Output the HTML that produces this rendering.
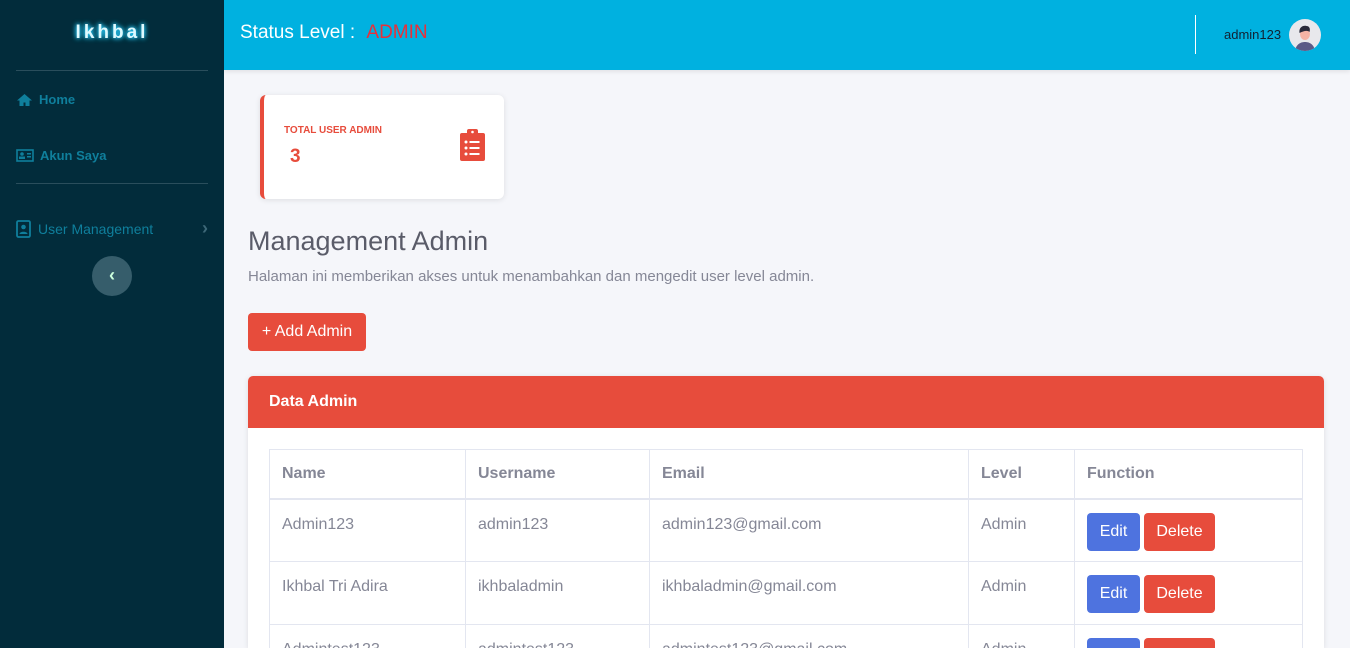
<!DOCTYPE html>
<html><head><style>
*{box-sizing:border-box;margin:0;padding:0}
html,body{width:1350px;height:648px;overflow:hidden}
body{font-family:"Liberation Sans",sans-serif;background:#f5f6fa;position:relative}
.sb{position:absolute;left:0;top:0;width:224px;height:648px;background:#022c3b}
.logo{position:absolute;top:22px;left:0;width:224px;text-align:center;color:#dffaff;font-weight:bold;font-size:19px;letter-spacing:3px;text-shadow:0 0 4px #2ad0ff,0 0 6px #2ad0ff}
.hr{position:absolute;left:16px;width:192px;height:1px;background:#2a4e5c}
.nav{position:absolute;left:16px;color:#0f7f9c;font-size:13px;font-weight:bold;display:flex;align-items:center;gap:6px}
.top{position:absolute;left:224px;top:0;right:0;height:70px;background:#00b1e0;box-shadow:0 2px 4px rgba(0,0,0,.08)}
.tt{position:absolute;left:16px;top:22px;color:#fff;font-size:19px}
.tt b{color:#e8303a;font-weight:normal;margin-left:6px}
.vl{position:absolute;left:971px;top:15px;width:1px;height:39px;background:#fff}
.un{position:absolute;left:1000px;top:27px;font-size:13px;color:#123}
.av{position:absolute;left:1065px;top:19px;width:32px;height:32px;border-radius:50%;background:#e8e8ec;overflow:hidden}
.card1{position:absolute;left:260px;top:95px;width:244px;height:104px;background:#fff;border-radius:6px;border-left:4px solid #e74c3c;box-shadow:0 1px 6px rgba(0,0,0,.1)}
h1{position:absolute;left:248px;top:226px;font-size:27px;font-weight:normal;color:#5a5c69}
.sub{position:absolute;left:248px;top:268px;font-size:15px;color:#858796}
.btn{position:absolute;color:#fff;border-radius:4px;font-size:16px;text-align:center}
.card{position:absolute;left:248px;top:376px;width:1076px;height:272px;background:#fff;border-radius:5px 5px 0 0;box-shadow:0 1px 6px rgba(0,0,0,.1);overflow:hidden}
.ch{height:52px;background:#e74c3c;color:#fff;font-weight:bold;font-size:16px;padding:17px 21px}
table{position:absolute;left:21px;top:73px;border-collapse:collapse;width:1034px;font-size:16px;color:#858796}
td,th{border:1px solid #e3e6f0;padding:0 12px;text-align:left;vertical-align:top}
th{height:49px;vertical-align:middle;border-bottom:2px solid #e3e6f0}
td{height:63px;padding-top:16px}
.e,.d{display:inline-block;color:#fff;border-radius:4px;padding:10px 0;text-align:center;margin-top:-3px}
.e{background:#4e73df;width:53px}.d{background:#e74c3c;width:71px;margin-left:4px}
</style></head><body>
<div class="sb">
<div class="logo">Ikhbal</div>
<div class="hr" style="top:70px"></div>
<div class="nav" style="top:92px"><svg width="17" height="14" viewBox="0 0 17 14"><path d="M8.5 1L1 7.5h2.5V13h4V9.5h2V13h4V7.5H16z" fill="#0f7f9c"/></svg>Home</div>
<div class="nav" style="top:148px"><svg width="18" height="13" viewBox="0 0 18 13"><rect x="1" y="1" width="16" height="11" fill="none" stroke="#0f7f9c" stroke-width="1.6"/><circle cx="6" cy="5" r="1.8" fill="#0f7f9c"/><rect x="3" y="7.5" width="6" height="2.5" fill="#0f7f9c"/><rect x="11" y="4" width="4" height="1.5" fill="#0f7f9c"/><rect x="11" y="7" width="4" height="1.5" fill="#0f7f9c"/></svg>Akun Saya</div>
<div class="hr" style="top:183px"></div>
<div class="nav" style="top:218px;font-weight:normal;font-size:14px;width:192px"><svg width="16" height="18" viewBox="0 0 16 18"><rect x="1" y="1" width="13" height="16" rx="1.5" fill="none" stroke="#0f7f9c" stroke-width="1.8"/><circle cx="7.5" cy="7" r="2.3" fill="#0f7f9c"/><path d="M3.5 14c0-3 8-3 8 0z" fill="#0f7f9c"/></svg>User Management<span style="margin-left:auto;color:#3d6878;font-weight:bold;font-size:18px">›</span></div>
<div style="position:absolute;left:92px;top:256px;width:40px;height:40px;border-radius:50%;background:#365d6b;color:#cfd;text-align:center;line-height:38px;font-weight:bold;font-size:18px">‹</div>
</div>
<div class="top">
<div class="tt">Status Level : <b>ADMIN</b></div>
<div class="vl"></div>
<div class="un">admin123</div>
<div class="av"><svg width="32" height="32" viewBox="0 0 32 32"><path d="M6 32c1-7 6-9 10-9s9 2 10 9z" fill="#5c5a87"/><ellipse cx="16" cy="15" rx="5" ry="6" fill="#f5b3a5"/><path d="M10.5 14c-1-6 4-8 7-7 3 0 4 3 3 6-2-2-6-1-10 1z" fill="#2a2a3a"/></svg></div>
</div>
<div class="card1">
<div style="position:absolute;left:20px;top:30px;font-size:10px;font-weight:bold;color:#e74c3c">TOTAL USER ADMIN</div>
<div style="position:absolute;left:26px;top:51px;font-size:19px;font-weight:bold;color:#e74c3c">3</div>
<svg style="position:absolute;left:196px;top:34px" width="25" height="32" viewBox="0 0 25 32"><rect x="0" y="4" width="25" height="28" rx="2" fill="#e74c3c"/><rect x="7" y="0" width="11" height="7" rx="2" fill="#e74c3c"/><circle cx="12.5" cy="3" r="1.3" fill="#fff"/><g fill="#fff"><circle cx="6" cy="13" r="1.5"/><circle cx="6" cy="19" r="1.5"/><circle cx="6" cy="25" r="1.5"/><rect x="9.5" y="12" width="10" height="2"/><rect x="9.5" y="18" width="10" height="2"/><rect x="9.5" y="24" width="10" height="2"/></g></svg>
</div>
<h1>Management Admin</h1>
<div class="sub">Halaman ini memberikan akses untuk menambahkan dan mengedit user level admin.</div>
<div class="btn" style="left:248px;top:313px;width:118px;height:38px;background:#e74c3c;line-height:38px">+ Add Admin</div>
<div class="card"><div class="ch">Data Admin</div>
<table>
<tr><th style="width:196px">Name</th><th style="width:184px">Username</th><th style="width:319px">Email</th><th style="width:106px">Level</th><th>Function</th></tr>
<tr><td>Admin123</td><td>admin123</td><td>admin123@gmail.com</td><td>Admin</td><td><span class="e">Edit</span><span class="d">Delete</span></td></tr>
<tr><td>Ikhbal Tri Adira</td><td>ikhbaladmin</td><td>ikhbaladmin@gmail.com</td><td>Admin</td><td><span class="e">Edit</span><span class="d">Delete</span></td></tr>
<tr><td>Admintest123</td><td>admintest123</td><td>admintest123@gmail.com</td><td>Admin</td><td><span class="e">Edit</span><span class="d">Delete</span></td></tr>
</table></div>
</body></html>
